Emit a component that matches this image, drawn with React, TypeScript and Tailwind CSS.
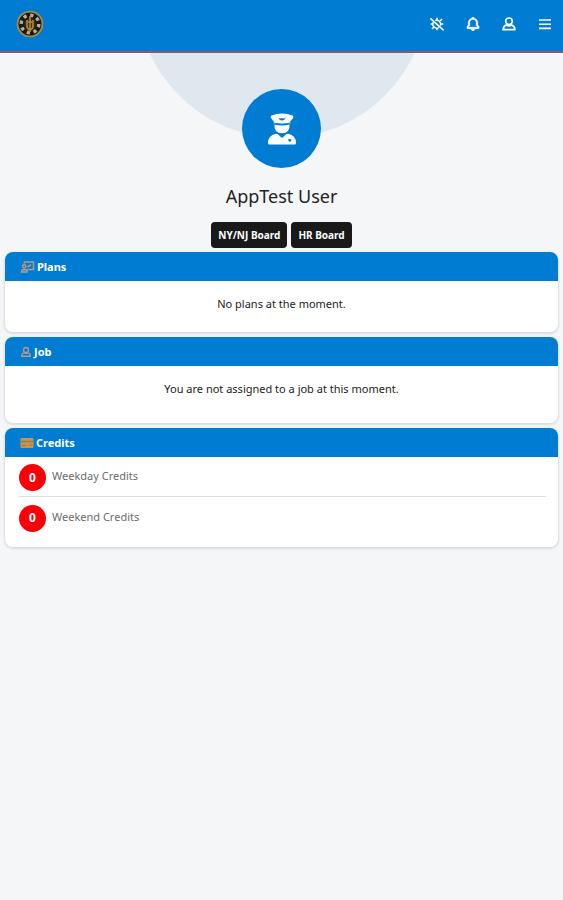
import React from "react";
import { BiBell } from "react-icons/bi";

function Seal() {
  return (
    <svg viewBox="0 0 28 28" className="size-7" role="img" aria-label="Association seal">
      <circle cx="14" cy="14" r="12.4" fill="#1b1a18" stroke="#a58a45" strokeWidth="1.800" />
      <circle cx="14" cy="14" r="8.800" fill="none" stroke="#b5ae9c" strokeWidth="3.400" strokeDasharray="3.200 3.700" />
      <circle cx="14" cy="14" r="5.800" fill="#3a2c16" />
      <path d="M14 6v16M11 10v6q0 3 3 4 3-1 3-4v-6M12 12h4" fill="none" stroke="#b98a2c" strokeWidth="1.600" />
    </svg>
  );
}

function TrackingOff() {
  return (
    <svg viewBox="0 0 24 24" className="size-4" fill="none" stroke="currentColor" strokeWidth="2.200" aria-hidden="true">
      <path d="M2 3.500l20 18M9.500 6.800a6 6 0 0 1 7.700 7.700M14.800 17.400A6 6 0 0 1 6.500 9.400" />
      <path d="M12 6V2.500M12 18v3.500M6 12H2.500M18 12h3.500M16.500 7.500l3-3M7.500 16.500l-3 3" />
    </svg>
  );
}

function MenuBars() {
  return (
    <svg viewBox="0 0 16 16" className="size-4" fill="none" stroke="currentColor" strokeWidth="1.600" aria-hidden="true">
      <path d="M2 4h12M2 8.200h12M2 12.400h12" />
    </svg>
  );
}

function Person({ className }: { className: string }) {
  return (
    <svg viewBox="0 0 24 24" className={className} fill="none" stroke="currentColor" strokeWidth="2.600" strokeLinejoin="round" aria-hidden="true">
      <circle cx="12" cy="8" r="5" />
      <path d="M8 13.500c-3 1-4.800 3-4.800 7h17.600c0-4-1.800-6-4.800-7-2.400 1.600-5.600 1.600-8 0z" />
    </svg>
  );
}

function Officer() {
  return (
    <svg viewBox="0 0 28 32" className="h-8 w-7" fill="#fff" aria-hidden="true">
      <path d="M14 0.500C18 0.500 21 1.200 24.500 2.600c1 .6 1 1.800.4 2.700L22.200 8.500v2.300H5.800V8.500L3.100 5.300C2.500 4.400 2.500 3.200 3.500 2.600 7 1.200 10 .5 14 .5z" />
      <path d="M10.500 4.500q1.700 1.500 3.500.6 1.800.9 3.500-.6-.6 3-3.500 3t-3.500-3z" fill="#007cd3" />
      <path d="M6 10.200q8 2.200 16 0" fill="none" stroke="#007cd3" strokeWidth="1" />
      <path d="M6.400 11.600q7.600 1.900 15.200 0 .4 8.700-7.600 8.700t-7.600-8.700z" />
      <path fillRule="evenodd" d="M7.700 20.800q2 0 3.200 1.400L14 25l3.100-2.800q1.200-1.400 3.200-1.400 7.700 1.800 7.700 9.200 0 1.500-1.500 1.500h-25Q0 31.500 0 30q0-7.400 7.700-9.200zM20 26.500q1.200 0 1.800-.8.6.8 1.800.8-.2 1.900-1.800 2.400-1.600-.5-1.800-2.400z" />
    </svg>
  );
}

function PlansIcon() {
  return (
    <svg viewBox="0 0 15 13" className="h-3 w-[15px]" fill="none" stroke="#b79a88" strokeWidth="1.600" aria-hidden="true">
      <path d="M4 3V1.200h10v8H8.500M7.500 6.500L11.500 4" />
      <circle cx="4" cy="5.800" r="1.800" />
      <path d="M1 12l.8-2.500h5.500L6.800 12z" />
    </svg>
  );
}

function CreditsIcon() {
  return (
    <svg viewBox="0 0 14 12" className="h-3 w-3.5" aria-hidden="true">
      <rect x="0.500" y="1" width="13" height="10" rx="1" fill="#c8964a" />
      <path d="M0.500 4.500h13" stroke="#8b7f63" strokeWidth="1.500" />
      <path d="M2 8.500h4M9 8h3" stroke="#8a7a5c" strokeWidth="1" />
    </svg>
  );
}

function Card({ icon, title, children }: { icon: React.ReactNode; title: string; children: React.ReactNode }) {
  return (
    <section className="overflow-hidden rounded-lg bg-white shadow-[0_1px_2px_1px_#d9dde2]">
      <h2 className="flex h-[29px] items-center gap-0.5 bg-[#007cd3] px-[15px] pt-px text-[11px] font-bold text-white">
        {icon}
        {title}
      </h2>
      {children}
    </section>
  );
}

function Credit({ count, label }: { count: number; label: string }) {
  return (
    <li className="flex h-10 items-center gap-1.5 pt-0.5">
      <span className="flex size-[27px] items-center justify-center rounded-full bg-[#fb0007] text-xs font-bold text-white">
        {count}
      </span>
      <span className="pb-0.5">{label}</span>
    </li>
  );
}

export default function App() {
  return (
    <div className="min-h-screen bg-[#f4f6f8] font-['Noto_Sans',sans-serif] text-[#222]">
      <header className="flex h-[53px] items-start justify-between border-b-2 border-[#91566f] bg-[#007cd3] px-4 pt-2.5 text-white">
        <a href="#home" aria-label="Home"><Seal /></a>
        <nav className="-mr-1.5 flex items-center gap-5 pt-1.5">
          <button type="button" aria-label="Tracking off"><TrackingOff /></button>
          <button type="button" aria-label="Notifications"><BiBell className="size-4" strokeWidth="1" /></button>
          <button type="button" aria-label="Profile"><Person className="size-4" /></button>
          <button type="button" aria-label="Menu"><MenuBars /></button>
        </nav>
      </header>
      <main className="px-[5px]">
        <div className="relative flex flex-col items-center overflow-hidden pt-9">
          <div className="absolute -top-[207px] left-1/2 size-[292px] -translate-x-1/2 rounded-full bg-[#e0e8ef]" />
          <div className="relative flex size-[79px] items-center justify-center rounded-full bg-[#007cd3]">
            <Officer />
          </div>
          <h1 className="mt-4 text-lg leading-6">AppTest User</h1>
          <div className="mt-3.5 flex gap-1 pb-1 text-[10px] font-bold text-white">
            <button type="button" className="h-[26px] rounded bg-[#191919] px-[7px]">NY/NJ Board</button>
            <button type="button" className="h-[26px] rounded bg-[#191919] px-[7px]">HR Board</button>
          </div>
        </div>
        <div className="flex flex-col gap-[5px]">
          <Card icon={<PlansIcon />} title="Plans">
            <p className="px-4 pt-[15px] pb-5 text-center text-[11px] leading-4">No plans at the moment.</p>
          </Card>
          <Card icon={<Person className="size-3 text-[#b79a88]" />} title="Job">
            <p className="px-4 pt-[15px] pb-[26px] text-center text-[11px] leading-4">You are not assigned to a job at this moment.</p>
          </Card>
          <Card icon={<CreditsIcon />} title="Credits">
            <ul className="divide-y divide-[#dddfe2] pr-3 pb-2.5 pl-3.5 text-[11px] text-[#6c6c6c]">
              <Credit count={0} label="Weekday Credits" />
              <Credit count={0} label="Weekend Credits" />
            </ul>
          </Card>
        </div>
      </main>
    </div>
  );
}
